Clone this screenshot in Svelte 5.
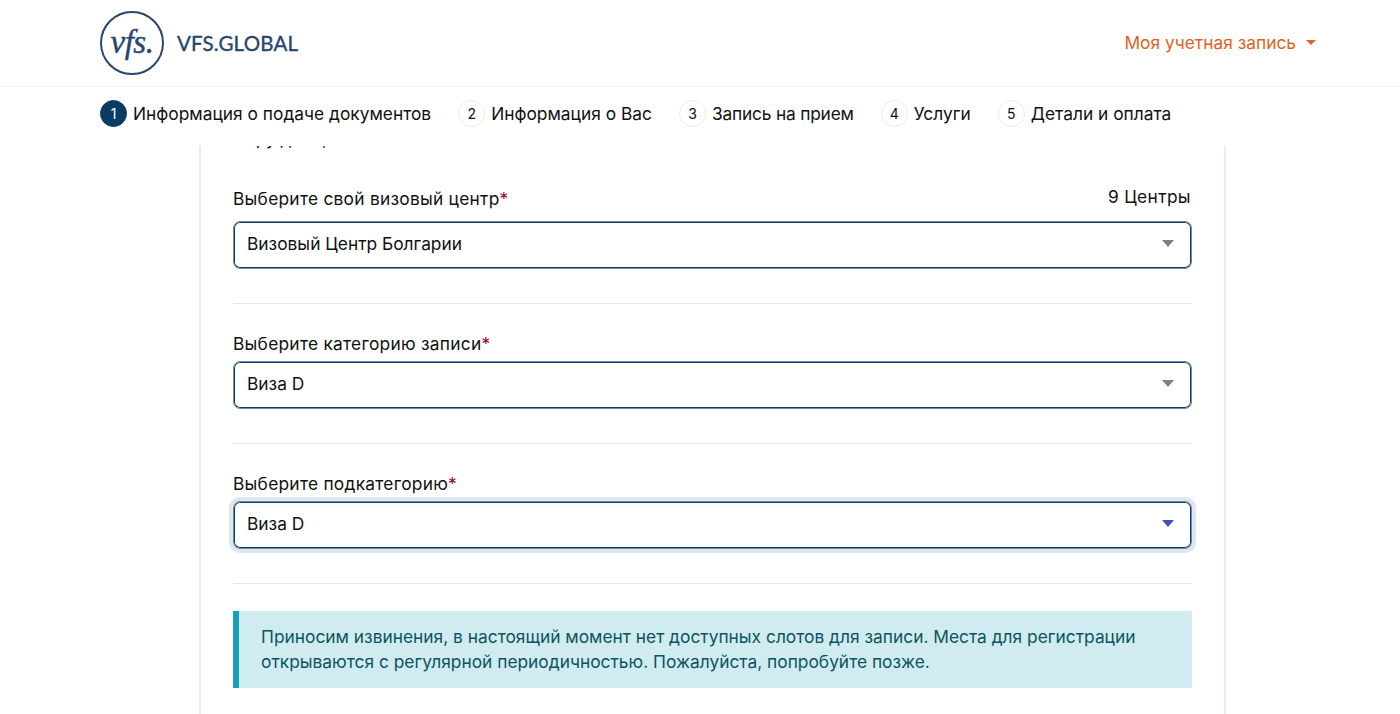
<script>
  const steps = [
    'Информация о подаче документов',
    'Информация о Вас',
    'Запись на прием',
    'Услуги',
    'Детали и оплата'
  ];
  const fields = [
    { label: 'Выберите свой визовый центр', value: 'Визовый Центр Болгарии', count: '9 Центры' },
    { label: 'Выберите категорию записи', value: 'Виза D' },
    { label: 'Выберите подкатегорию', value: 'Виза D', focus: true }
  ];
</script>

<div class="page">
  <header class="top">
    <div class="brand">
      <div class="seal"><span>vfs.</span></div>
      <span class="word">VFS.GLOBAL</span>
    </div>
    <div class="account">Моя учетная запись <i class="caret"></i></div>
  </header>

  <nav class="steps">
    {#each steps as s, i}
      <div class="step" class:tight={i === 2}>
        <span class="num" class:on={i === 0}>{i + 1}</span>
        <span>{s}</span>
      </div>
    {/each}
  </nav>

  <main class="view">
    <section class="card">
      <p class="clipped">Пару дней,</p>
      {#each fields as f}
        <div class="field">
          <div class="labels" class:tall={f.count}>
            <label>{f.label}<em>*</em></label>
            {#if f.count}<span class="count">{f.count}</span>{/if}
          </div>
          <div class="select" class:focus={f.focus}>
            <span>{f.value}</span>
            <i class="arrow"></i>
          </div>
        </div>
        <hr />
      {/each}
      <div class="alert">
        Приносим извинения, в настоящий момент нет доступных слотов для записи. Места для регистрации открываются с регулярной периодичностью. Пожалуйста, попробуйте позже.
      </div>
    </section>
  </main>
</div>

<style>
  :global(body) {
    margin: 0;
    background: #fff;
  }
  .page {
    height: 714px;
    overflow: hidden;
    display: flex;
    flex-direction: column;
    font-family: Inter, "Liberation Sans", sans-serif;
    color: #111;
    font-size: 17.35px;
  }
  .top {
    height: 87px;
    flex: none;
    box-sizing: border-box;
    border-bottom: 1px solid #f2f2f2;
    display: flex;
    align-items: center;
    justify-content: space-between;
    padding: 0 84px 1px 100px;
  }
  .brand {
    display: flex;
    align-items: center;
    gap: 13px;
  }
  .seal {
    width: 64px;
    height: 64px;
    box-sizing: border-box;
    border: 2px solid #26466d;
    border-radius: 50%;
    display: flex;
    align-items: center;
    justify-content: center;
    color: #26466d;
    font: italic 400 33px/1 "Liberation Serif", serif;
    -webkit-text-stroke: 0.4px #26466d;
    letter-spacing: -0.5px;
  }
  .word {
    font: 400 20.5px/1 Lato, "Liberation Sans", sans-serif;
    -webkit-text-stroke: 0.35px #26466d;
    color: #26466d;
    letter-spacing: 0.2px;
    margin-top: 2px;
  }
  .account {
    color: #e35f24;
    display: flex;
    align-items: center;
    gap: 10px;
  }
  .caret {
    width: 0;
    height: 0;
    border: 5px solid transparent;
    border-top-color: #e35f24;
    border-bottom: 0;
  }
  .steps {
    height: 59px;
    flex: none;
    box-sizing: border-box;
    display: flex;
    align-items: center;
    gap: 27px;
    padding: 0 0 6px 100px;
    background: #fff;
    position: relative;
    z-index: 1;
  }
  .step {
    display: flex;
    align-items: center;
    gap: 6px;
  }
  .step.tight {
    letter-spacing: -0.2px;
  }
  .num {
    width: 27px;
    height: 27px;
    box-sizing: border-box;
    border-radius: 50%;
    border: 1px solid #ebebeb;
    background: #fff;
    font-size: 14px;
    display: flex;
    align-items: center;
    justify-content: center;
  }
  .num.on {
    background: #0b3a63;
    border-color: #0b3a63;
    color: #fff;
  }
  .view {
    flex: 1;
    min-height: 0;
    padding-left: 199px;
  }
  .card {
    width: 1027px;
    box-sizing: border-box;
    height: 600px;
    border-left: 2px solid #e8edf4;
    border-right: 2px solid #e8edf4;
    padding: 0 32px;
    margin-top: -18px;
  }
  .clipped {
    margin: 0 0 29px;
    height: 22px;
    line-height: 22px;
  }
  .labels {
    display: flex;
    justify-content: space-between;
    align-items: flex-start;
    height: 37px;
    letter-spacing: 0.25px;
  }
  .labels.tall {
    height: 42px;
  }
  label {
    line-height: 22px;
    margin-top: 9px;
  }
  .count {
    line-height: 22px;
    margin-top: 7px;
    margin-right: 1px;
    letter-spacing: 0.36px;
  }
  em {
    color: #a00a1e;
    font-style: normal;
  }
  .select {
    height: 48px;
    box-sizing: border-box;
    border: 1px solid #6f8ba6;
    box-shadow: inset 0 0 0 1px #0f3b66;
    border-radius: 7px;
    display: flex;
    align-items: center;
    justify-content: space-between;
    padding: 0 17px 3px 13px;
    background: #fff;
  }
  .select.focus {
    box-shadow: inset 0 0 0 1px #0f3b66, 0 0 0 4px #e0e6ef;
  }
  .arrow {
    width: 0;
    height: 0;
    border: 6px solid transparent;
    border-top: 7px solid #808080;
    border-bottom: 0;
  }
  .focus .arrow {
    border-top-color: #3f51b5;
  }
  hr {
    border: 0;
    border-top: 1px solid #e5e5e5;
    margin: 34px 0 20px;
  }
  .alert {
    margin-top: 27px;
    height: 77px;
    box-sizing: border-box;
    background: #d1ecf1;
    border-left: 6px solid #17a2b8;
    color: #0c5460;
    padding: 13px 22px 0;
    line-height: 25px;
  }
</style>
